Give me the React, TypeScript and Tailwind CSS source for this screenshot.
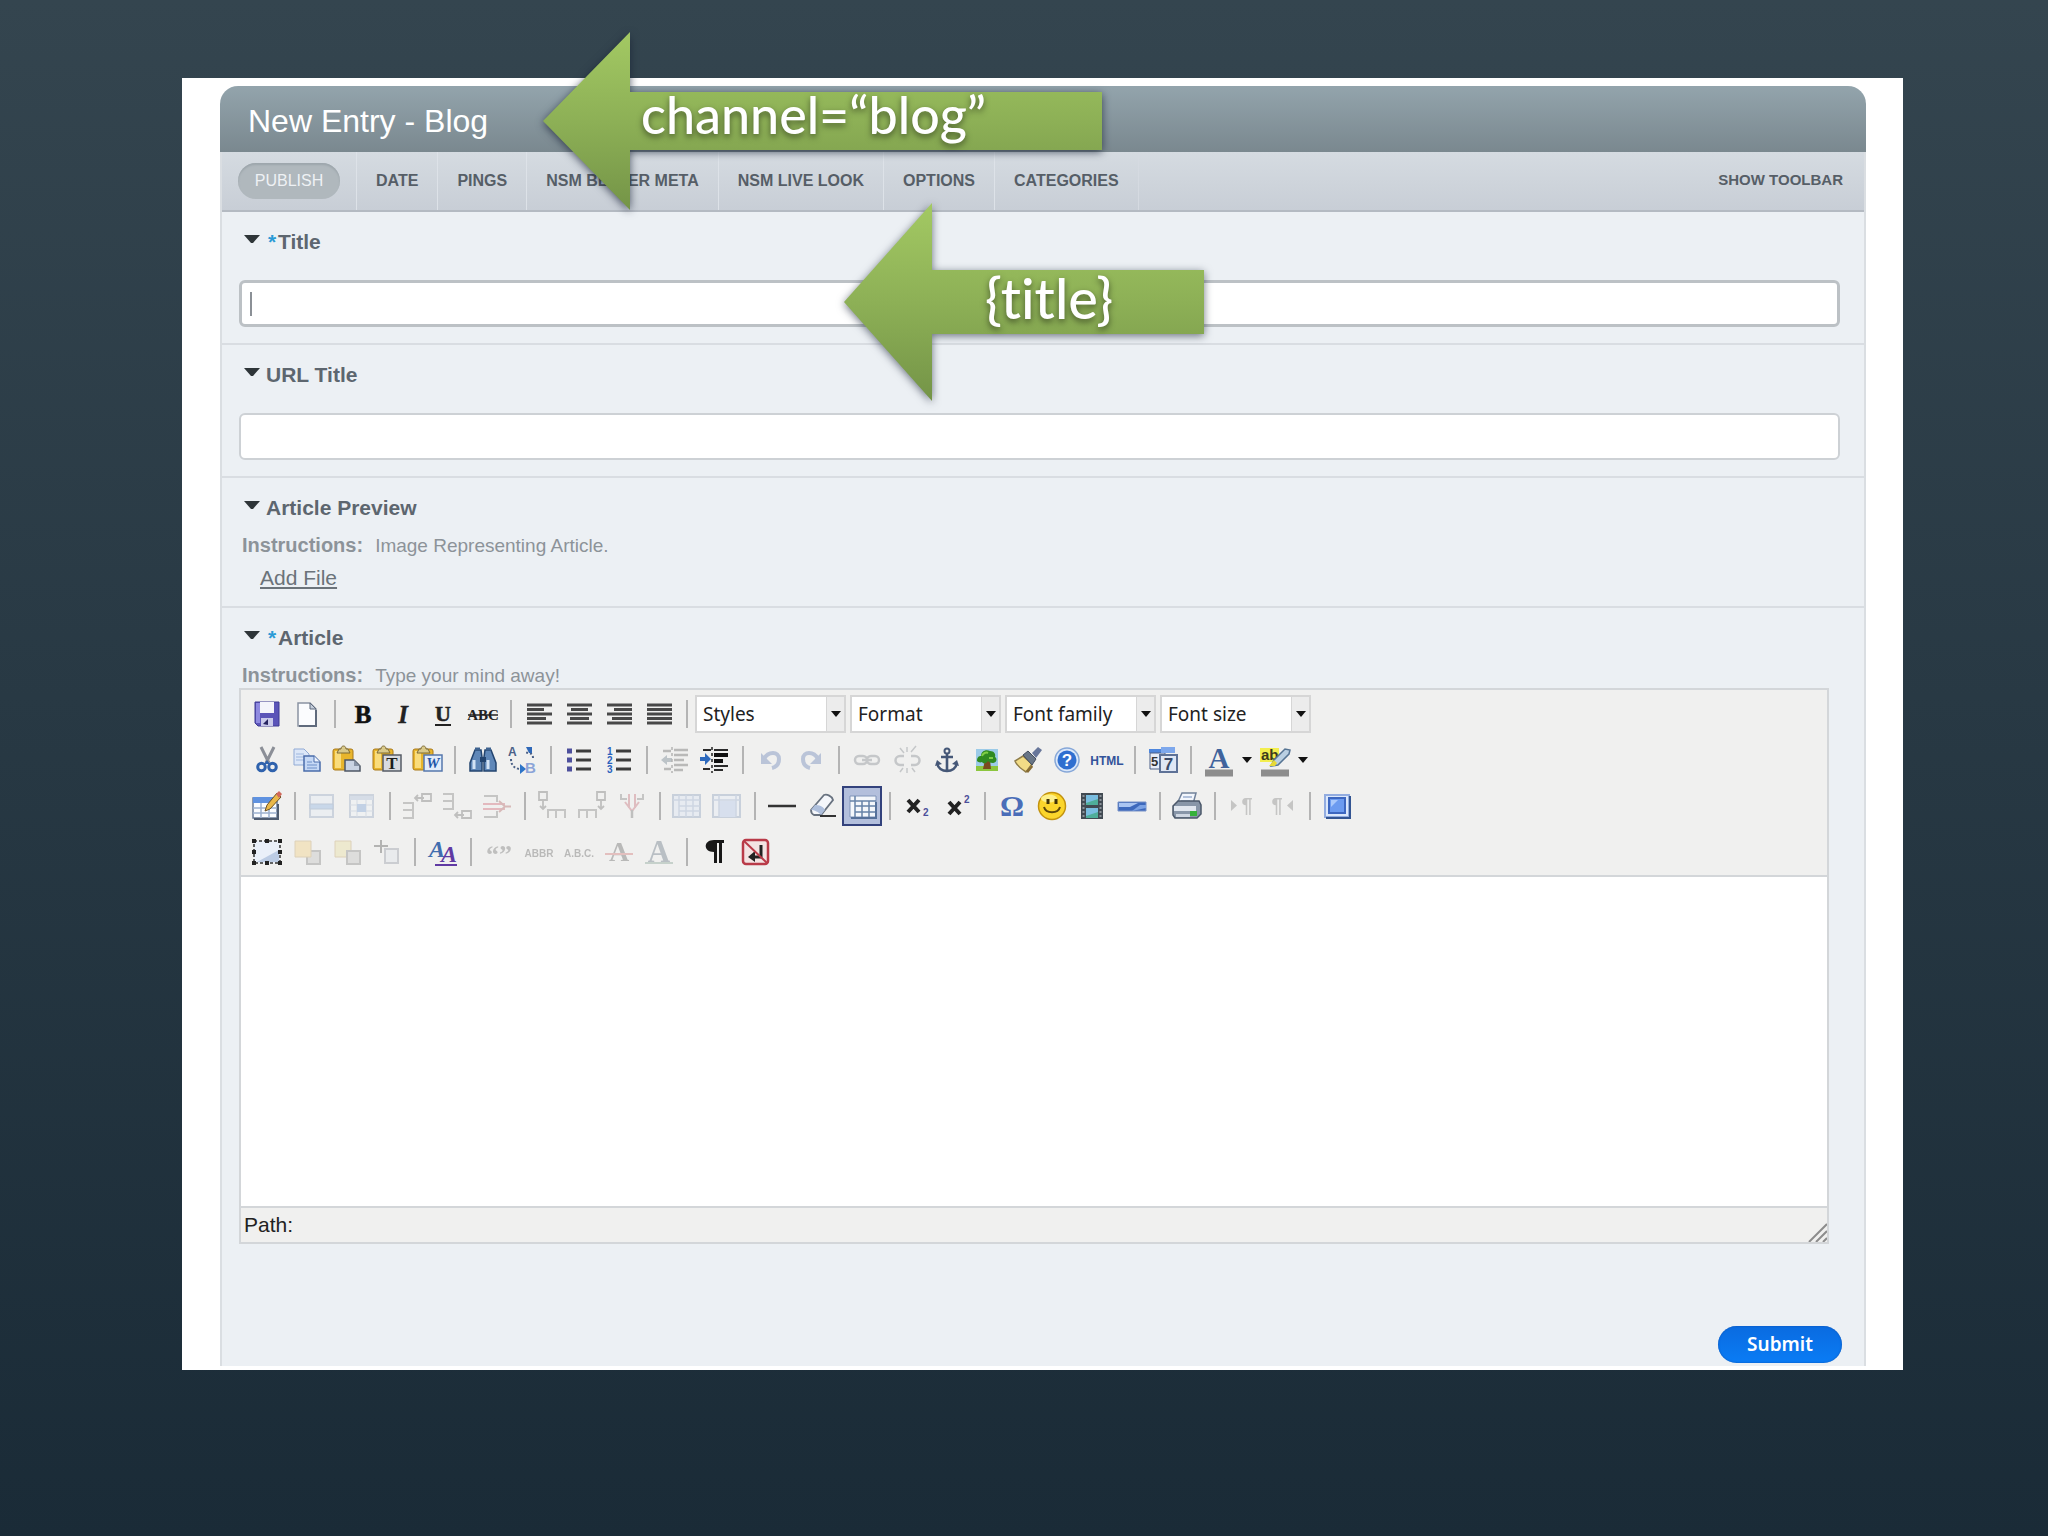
import React from 'react';

type IconDef = { name: string; art: React.ReactNode; faded?: boolean; active?: boolean; menu?: boolean };
type Item = IconDef | '|';

const serif = 'Liberation Serif, serif';
const sans = 'Liberation Sans, sans-serif';

function lines(rows: [number, number][], color = '#484848', weight = 3) {
  return rows.map(([x1, x2], i) => (
    <path key={i} d={`M${x1} ${11 + i * 4.5}H${x2}`} stroke={color} strokeWidth={weight} />
  ));
}

const clipboard = (
  <>
    <rect x="6" y="9" width="20" height="21" rx="2" fill="#e8b52c" stroke="#a8791a" />
    <path d="M8 11h6v17H8z" fill="#f9dc7c" />
    <path d="M10 13l2-4h2c0-4 5-4 5 0h2l2 4z" fill="#d9c98a" stroke="#7d6a35" />
  </>
);

const row1: Item[] = [
  {
    name: 'Save',
    art: (
      <>
        <path d="M8 8h24v24H11l-3-3z" fill="#5b54b8" stroke="#3f3a94" />
        <path d="M9 9h4v20H9z" fill="#8f8ae0" />
        <path d="M13 8h14v11H13z" fill="#f4f4fb" />
        <path d="M14 24h12v8H14z" fill="#c9c9ea" />
        <path d="M16 30l5-5v6z" fill="#26235f" />
      </>
    ),
  },
  {
    name: 'New document',
    art: (
      <>
        <path d="M11 9h12l6 6v17H11z" fill="#fbfcfe" stroke="#8a93a3" strokeWidth="1.5" />
        <path d="M29 16v16H12" fill="none" stroke="#5f6a7c" strokeWidth="2" />
        <path d="M23 9v6h6z" fill="#c5cedb" stroke="#5f6a7c" />
      </>
    ),
  },
  '|',
  { name: 'Bold', art: <text x="20" y="29" textAnchor="middle" fontFamily={serif} fontWeight="700" fontSize="25" stroke="#111" strokeWidth=".6" fill="#111">B</text> },
  { name: 'Italic', art: <text x="20" y="29" textAnchor="middle" fontFamily={serif} fontWeight="700" fontStyle="italic" fontSize="25" stroke="#222" strokeWidth=".4" fill="#222">I</text> },
  {
    name: 'Underline',
    art: (
      <>
        <text x="20" y="27" textAnchor="middle" fontFamily={serif} fontWeight="700" fontSize="22" stroke="#222" strokeWidth=".5" fill="#222">U</text>
        <path d="M12 31h16" stroke="#222" strokeWidth="2" />
      </>
    ),
  },
  {
    name: 'Strikethrough',
    art: (
      <>
        <text x="20" y="26" textAnchor="middle" fontFamily={serif} fontWeight="700" fontSize="15" fill="#222">ABC</text>
        <path d="M5 21h30" stroke="#222" strokeWidth="1.500" />
      </>
    ),
  },
  '|',
  { name: 'Align left', art: lines([[8, 33], [8, 25], [8, 33], [8, 27], [8, 33]]) },
  { name: 'Align center', art: lines([[8, 33], [12, 29], [8, 33], [11, 30], [8, 33]]) },
  { name: 'Align right', art: lines([[8, 33], [15, 33], [8, 33], [13, 33], [8, 33]]) },
  { name: 'Align full', art: lines([[8, 33], [8, 33], [8, 33], [8, 33], [8, 33]]) },
  '|',
];

const row2: Item[] = [
  {
    name: 'Cut',
    art: (
      <>
        <path d="M14 7l8 16M27 7l-8 16" stroke="#8b8f97" strokeWidth="3" />
        <circle cx="14.500" cy="27" r="3.800" fill="none" stroke="#2f62ad" strokeWidth="3" />
        <circle cx="25.500" cy="27" r="3.800" fill="none" stroke="#2f62ad" strokeWidth="3" />
        <path d="M17 24l3-4 3 4" fill="#2f62ad" />
      </>
    ),
  },
  {
    name: 'Copy',
    art: (
      <>
        <path d="M7 9h10l5 5v11H7z" fill="#dce7f8" stroke="#91aad4" />
        <path d="M9 14h8M9 17h8M9 20h8" stroke="#9db6de" />
        <path d="M17 16h10l6 6v9H17z" fill="#c5d8f5" stroke="#4a6cab" strokeWidth="1.500" />
        <path d="M27 16v6h6" fill="#eef4fd" stroke="#4a6cab" />
        <path d="M20 22h5M20 25h10M20 28h10" stroke="#6d8fc8" />
      </>
    ),
  },
  {
    name: 'Paste',
    art: (
      <>
        {clipboard}
        <path d="M18 20h9l6 6v5H18z" fill="#c9d3e2" stroke="#4d5765" strokeWidth="1.500" />
        <path d="M27 20v6h6z" fill="#8793a5" />
      </>
    ),
  },
  {
    name: 'Paste as plain text',
    art: (
      <>
        {clipboard}
        <rect x="16" y="15" width="18" height="16" fill="#d8dbe0" stroke="#555b66" strokeWidth="1.500" />
        <text x="25" y="29" textAnchor="middle" fontFamily={serif} fontWeight="700" fontSize="17" fill="#1d1d1d">T</text>
      </>
    ),
  },
  {
    name: 'Paste from Word',
    art: (
      <>
        {clipboard}
        <rect x="17" y="15" width="18" height="16" fill="#e3edfb" stroke="#5577ad" strokeWidth="1.500" />
        <text x="26" y="28" textAnchor="middle" fontFamily={serif} fontWeight="700" fontStyle="italic" fontSize="15" fill="#1f55a8">W</text>
      </>
    ),
  },
  '|',
  {
    name: 'Find',
    art: (
      <>
        <path d="M12 10h6l1 7v14H7v-8z" fill="#5f87b8" stroke="#23446f" strokeWidth="1.500" />
        <path d="M22 10h6l5 13v8H21V17z" fill="#5f87b8" stroke="#23446f" strokeWidth="1.500" />
        <path d="M17 17h6v5h-6z" fill="#23446f" />
        <path d="M11 20v9M25 20v9" stroke="#d3e3f5" strokeWidth="3" />
        <path d="M12 9h5M23 9h5" stroke="#3e628f" strokeWidth="3" />
      </>
    ),
  },
  {
    name: 'Find and replace',
    art: (
      <>
        <text x="5" y="16" fontFamily={sans} fontWeight="700" fontSize="12" fill="#4a6088">A</text>
        <text x="22" y="33" fontFamily={sans} fontWeight="700" fontSize="15" fill="#8ba4d8">B</text>
        <path d="M8 19c0 6 3 9 8 10" fill="none" stroke="#4a5f85" strokeWidth="2" strokeDasharray="2 2" />
        <path d="M17 24l6 5-6 5z" fill="#2d74c8" />
        <path d="M30 18c0-4-3-6-8-5" fill="none" stroke="#4a5f85" strokeWidth="2" strokeDasharray="2 2" />
        <path d="M23 7h6v6h-3z" fill="#2f68b8" />
      </>
    ),
  },
  '|',
  {
    name: 'Bulleted list',
    art: (
      <>
        <path d="M17 11h15M17 20h15M17 29h15" stroke="#3c3c3c" strokeWidth="3" />
        <path d="M8 11h5M8 20h5M8 29h5" stroke="#4d4f9c" strokeWidth="5" />
      </>
    ),
  },
  {
    name: 'Numbered list',
    art: (
      <>
        <path d="M17 11h15M17 20h15M17 29h15" stroke="#3c3c3c" strokeWidth="3" />
        <g fontFamily={sans} fontWeight="700" fontSize="10" fill="#2a62bd">
          <text x="8" y="15">1</text><text x="8" y="24">2</text><text x="8" y="33">3</text>
        </g>
      </>
    ),
  },
  '|',
  {
    name: 'Outdent', faded: true,
    art: (
      <>
        <path d="M8 11h8M19 10h14M19 15h14M19 20h10M19 25h14M9 29h7M19 30h9" stroke="#555" strokeWidth="2.500" />
        <path d="M6 20l6-5v3h5v4h-5v3z" fill="#5d7180" />
        <path d="M17 7v26" stroke="#444" strokeWidth="1.500" strokeDasharray="3 3" />
      </>
    ),
  },
  {
    name: 'Indent',
    art: (
      <>
        <path d="M8 10h8M8 29h7M19 10h14M19 26h14M19 30h9" stroke="#2a2a2a" strokeWidth="2" />
        <path d="M19 15h14M19 21h9" stroke="#111" strokeWidth="4" />
        <path d="M16 19l-6-6v4H5v4h5v4z" fill="#2c69bd" />
        <path d="M17 7v26" stroke="#222" strokeWidth="1.500" strokeDasharray="3 3" />
      </>
    ),
  },
  '|',
  {
    name: 'Undo', faded: true,
    art: (
      <>
        <path d="M13 19c4-8 15-8 15 0 0 5-3 8-7 9" fill="none" stroke="#5874b0" strokeWidth="4" />
        <path d="M10 13v11h11z" fill="#5874b0" />
      </>
    ),
  },
  {
    name: 'Redo', faded: true,
    art: (
      <>
        <path d="M27 19c-4-8-15-8-15 0 0 5 3 8 7 9" fill="none" stroke="#5874b0" strokeWidth="4" />
        <path d="M30 13v11H19z" fill="#5874b0" />
      </>
    ),
  },
  '|',
  {
    name: 'Insert link', faded: true,
    art: (
      <>
        <rect x="8" y="16" width="12" height="8" rx="4" fill="none" stroke="#777d84" strokeWidth="2.500" />
        <rect x="20" y="16" width="12" height="8" rx="4" fill="none" stroke="#777d84" strokeWidth="2.500" />
        <path d="M15 20h10" stroke="#777d84" strokeWidth="2.500" />
      </>
    ),
  },
  {
    name: 'Unlink', faded: true,
    art: (
      <>
        <path d="M17 16h-4a4.500 4.500 0 0 0 0 9h4M24 16h4a4.500 4.500 0 0 1 0 9h-4" fill="none" stroke="#777d84" strokeWidth="2.500" />
        <path d="M20 7v5M13 8l4 5M29 6l-5 6M20 28v5M13 32l3-4M28 32l-3-4" stroke="#777d84" strokeWidth="1.500" />
      </>
    ),
  },
  {
    name: 'Anchor',
    art: (
      <>
        <circle cx="20" cy="11" r="2.500" fill="none" stroke="#455777" strokeWidth="2" />
        <path d="M20 13v17M14 17h12M10 23c1 5 5 8 10 8s9-3 10-8" fill="none" stroke="#455777" strokeWidth="2.600" />
        <path d="M8 26l2-6 5 4zM32 26l-2-6-5 4z" fill="#455777" />
      </>
    ),
  },
  {
    name: 'Insert image',
    art: (
      <>
        <path d="M9 9h22v22H9z" fill="#9ccbe8" />
        <path d="M9 26h22v5H9z" fill="#8cc63e" />
        <path d="M18 20h5l1 9h-8z" fill="#7a4b1e" />
        <path d="M10 21c0-4 2-5 4-5 0-5 5-7 9-5 4 0 6 3 5 6 3 2 1 6-2 6-3 0-4-1-5-2-2 3-5 3-6 1-2 1-4 0-5-1z" fill="#2f8a21" />
        <path d="M15 16c1-3 4-4 6-3M22 18h4" stroke="#7fce46" strokeWidth="2" fill="none" />
      </>
    ),
  },
  {
    name: 'Clean up',
    art: (
      <>
        <path d="M8 21l8-5 9 8-6 8c-5-3-9-6-11-11z" fill="#f2dc86" stroke="#8e7c49" strokeWidth="1.500" />
        <path d="M16 15l5-4 8 8-4 6z" fill="#687586" stroke="#434d5d" />
        <path d="M25 13l6-6 4 3-6 8z" fill="#67769a" />
        <path d="M19 31l6-6 1 2-5 6z" fill="#876b32" />
      </>
    ),
  },
  {
    name: 'Help',
    art: (
      <>
        <circle cx="20" cy="20" r="12" fill="#dbe8fa" stroke="#86a7d8" strokeWidth="1.500" />
        <circle cx="20" cy="20" r="9.500" fill="#2f6fd0" />
        <text x="20" y="26" textAnchor="middle" fontFamily={sans} fontWeight="700" fontSize="17" fill="#fff">?</text>
      </>
    ),
  },
  { name: 'Edit HTML source', art: <text x="20" y="25" textAnchor="middle" fontFamily={sans} fontWeight="700" fontSize="12" fill="#33539a">HTML</text> },
  '|',
  {
    name: 'Insert date and time',
    art: (
      <>
        <path d="M6 9h24v4H6z" fill="#4d86dd" />
        <path d="M7 13h15v16H7z" fill="#e7edf8" stroke="#4b5e86" />
        <path d="M18 7h14v6H18z" fill="#7ea8ec" />
        <text x="8" y="26" fontFamily={sans} fontWeight="700" fontSize="13" fill="#333">5</text>
        <path d="M17 15h17v17H17z" fill="#dfe7f5" stroke="#5e7297" strokeWidth="2" />
        <text x="25.500" y="30" textAnchor="middle" fontFamily={sans} fontWeight="700" fontSize="17" fill="#3a4a68">7</text>
      </>
    ),
  },
  '|',
  {
    name: 'Text color', menu: true,
    art: (
      <>
        <text x="20" y="28" textAnchor="middle" fontFamily={serif} fontWeight="700" fontSize="29" fill="#3f639c">A</text>
        <path d="M6 33h28" stroke="#8d8d8d" strokeWidth="7" />
      </>
    ),
  },
  {
    name: 'Background color', menu: true,
    art: (
      <>
        <path d="M5 8h19v14H5z" fill="#f3ee4e" />
        <text x="6" y="20" fontFamily={sans} fontWeight="700" fontSize="15" fill="#3d3a1b">ab</text>
        <path d="M16 26l3-6L30 9l5 1-1 4-11 11z" fill="#b9cfe2" stroke="#567493" strokeWidth="1.500" />
        <path d="M14 26h6l2-3-3-3z" fill="#e7d936" />
        <path d="M6 33h28" stroke="#8d8d8d" strokeWidth="7" />
      </>
    ),
  },
];

const row3: Item[] = [
  {
    name: 'Insert table',
    art: (
      <>
        <path d="M6 12h24v20H6z" fill="#fafcff" stroke="#6b7c99" strokeWidth="1.500" />
        <path d="M6 11h24v6H6z" fill="#5f92e0" />
        <path d="M6 22h24M6 27h24M14 17v15M22 17v15" stroke="#9cb0d0" strokeWidth="1.500" />
        <path d="M7 33h24V18" stroke="#4e5b70" fill="none" strokeWidth="2" />
        <path d="M18 25l2-6L30 7l4 4-11 12z" fill="#e9b84a" stroke="#6d5124" />
        <path d="M29 8l3-3 3 3-3 4z" fill="#d0685b" />
      </>
    ),
  },
  '|',
  {
    name: 'Table row properties', faded: true,
    art: (
      <>
        <path d="M8 9h23v22H8z" fill="#e3ecf7" stroke="#8ca0bd" strokeWidth="2" />
        <path d="M8 18h23v5H8z" fill="#7fa9e0" stroke="#6b87b2" />
      </>
    ),
  },
  {
    name: 'Table cell properties', faded: true,
    art: (
      <>
        <path d="M8 9h23v22H8z" fill="#eef3fa" stroke="#8ca0bd" strokeWidth="2" />
        <path d="M8 10h23v4H8z" fill="#a8bcdb" />
        <path d="M8 19h23M8 25h23M15 14v17M24 14v17" stroke="#a7b6cd" />
        <path d="M15 18h9v8h-9z" fill="#6f98d4" />
      </>
    ),
  },
  '|',
  {
    name: 'Insert row before', faded: true,
    art: (
      <>
        <path d="M6 17h10v15H6M6 24h10" fill="none" stroke="#777" strokeWidth="2" />
        <path d="M18 12h9M21 9l-3 3 3 3M25 8h9v7h-9z" fill="none" stroke="#666" strokeWidth="1.800" />
      </>
    ),
  },
  {
    name: 'Insert row after', faded: true,
    art: (
      <>
        <path d="M6 8h10v15H6M6 15h10" fill="none" stroke="#777" strokeWidth="2" />
        <path d="M18 29h9M21 26l-3 3 3 3M25 25h9v7h-9z" fill="none" stroke="#666" strokeWidth="1.800" />
      </>
    ),
  },
  {
    name: 'Delete row', faded: true,
    art: (
      <>
        <path d="M7 10h13v6M7 31h13v-6" fill="none" stroke="#777" strokeWidth="2" />
        <path d="M6 18h22M6 23h22" stroke="#cc5566" strokeWidth="1.800" />
        <path d="M22 15l6 5.500-6 5.500M28 20.500h6" fill="none" stroke="#a55" strokeWidth="2" />
      </>
    ),
  },
  '|',
  {
    name: 'Insert column before', faded: true,
    art: (
      <>
        <path d="M7 6h8v8H7zM11 14v8M8 20l3 3 3-3" fill="none" stroke="#666" strokeWidth="1.800" />
        <path d="M16 32v-8h17v8M24 24v8" fill="none" stroke="#777" strokeWidth="2" />
      </>
    ),
  },
  {
    name: 'Insert column after', faded: true,
    art: (
      <>
        <path d="M25 6h8v8h-8zM29 14v8M26 20l3 3 3-3" fill="none" stroke="#666" strokeWidth="1.800" />
        <path d="M7 32v-8h17v8M15 24v8" fill="none" stroke="#777" strokeWidth="2" />
      </>
    ),
  },
  {
    name: 'Delete column', faded: true,
    art: (
      <>
        <path d="M9 8v5h6M31 8v5h-6" fill="none" stroke="#777" strokeWidth="2" />
        <path d="M17 8v14M23 8v14M13 16l7 9 7-9" fill="none" stroke="#c0606c" strokeWidth="2" />
        <path d="M20 24v8" stroke="#666" strokeWidth="2.500" />
      </>
    ),
  },
  '|',
  {
    name: 'Split cells', faded: true,
    art: (
      <>
        <path d="M6 9h27v22H6z" fill="#d9e4f5" stroke="#8095b8" strokeWidth="2" />
        <path d="M6 14h27M12 9v22M12 20h21M12 25h21M19 9v22M26 9v22" stroke="#8fa6cc" strokeWidth="1.500" />
      </>
    ),
  },
  {
    name: 'Merge cells', faded: true,
    art: (
      <>
        <path d="M6 9h27v22H6z" fill="#e3ebf8" stroke="#8095b8" strokeWidth="2" />
        <path d="M12 15h17v16H12z" fill="#a9c2ea" />
        <path d="M6 14h27M12 9v22M29 9v22" stroke="#8fa6cc" strokeWidth="1.500" />
      </>
    ),
  },
  '|',
  { name: 'Horizontal rule', art: <path d="M6 20h28" stroke="#333" strokeWidth="2.500" /> },
  {
    name: 'Remove formatting',
    art: (
      <>
        <path d="M9 24L22 9c3-1 8 1 9 5L19 29h-7c-2-1-3-3-3-5z" fill="#f5f7fb" stroke="#68727f" strokeWidth="1.800" />
        <path d="M9 24c3 0 8 2 10 5l4-5c-2-4-6-5-10-5z" fill="#aebfdc" />
        <path d="M18 30h16" stroke="#333" strokeWidth="2" />
      </>
    ),
  },
  {
    name: 'Toggle guidelines', active: true,
    art: (
      <>
        <path d="M8 10h26v21H8z" fill="#f4f7fb" stroke="#7f93b8" />
        <path d="M8 15h26M13 20h21M13 26h21M13 10v21M20 15v16M27 15v16" stroke="#6683a8" strokeWidth="1.500" />
        <path d="M9 32h25V16" fill="none" stroke="#56719a" strokeWidth="2" />
      </>
    ),
  },
  '|',
  {
    name: 'Subscript',
    art: (
      <>
        <path d="M11 14l11 12M22 14L11 26" stroke="#222" strokeWidth="4" />
        <text x="26" y="30" fontFamily={sans} fontWeight="700" fontSize="10" fill="#4b4f9a">2</text>
      </>
    ),
  },
  {
    name: 'Superscript',
    art: (
      <>
        <path d="M12 16l11 12M23 16L12 28" stroke="#222" strokeWidth="4" />
        <text x="27" y="17" fontFamily={sans} fontWeight="700" fontSize="10" fill="#4b4f9a">2</text>
      </>
    ),
  },
  '|',
  { name: 'Custom character', art: <text x="20" y="30" textAnchor="middle" fontFamily={serif} fontWeight="700" fontSize="30" fill="#4a6db8">Ω</text> },
  {
    name: 'Emotions',
    art: (
      <>
        <circle cx="20" cy="20" r="13.500" fill="#fbd52b" stroke="#c3930f" strokeWidth="1.500" />
        <ellipse cx="17" cy="12.500" rx="8" ry="4" fill="#fdf08b" />
        <path d="M16 13v5M24 13v5" stroke="#3f3208" strokeWidth="3" />
        <path d="M12 21c2 7 14 7 16 0" fill="none" stroke="#5e480a" strokeWidth="2" />
      </>
    ),
  },
  {
    name: 'Embedded media',
    art: (
      <>
        <path d="M9 7h22v26H9z" fill="#414a52" />
        <path d="M14 9h12v10H14zM14 22h12v10H14z" fill="#4fae9a" />
        <path d="M14 9h12v4L14 17zM14 22h12v4L14 30z" fill="#79bde0" />
        <path d="M11.500 9v23M28.500 9v23" stroke="#8b9299" strokeWidth="2" strokeDasharray="2 2" />
      </>
    ),
  },
  {
    name: 'Advanced rule',
    art: (
      <>
        <path d="M6 16h28v9H6z" fill="#3d69bd" stroke="#7992c6" />
        <path d="M7 17h19l-8 4H7z" fill="#aac5f2" />
        <path d="M20 25l8-6h6v3z" fill="#7ba2e4" />
      </>
    ),
  },
  '|',
  {
    name: 'Print',
    art: (
      <>
        <path d="M15 7h14l-3 11H10z" fill="#f2f6fc" stroke="#71829b" strokeWidth="1.500" />
        <path d="M16 11h9M14 15h9" stroke="#9cb0cf" strokeWidth="1.500" />
        <path d="M6 20l5-5h21l2 4v9l-4 4H8l-2-3z" fill="#8896a8" stroke="#4b586a" strokeWidth="1.500" />
        <path d="M7 20h22v5H7z" fill="#e1e7ef" />
        <path d="M9 28h14v3H9z" fill="#cfd7e2" />
        <path d="M23 25h7v5h-7z" fill="#35b13a" />
      </>
    ),
  },
  '|',
  {
    name: 'Left to right', faded: true,
    art: (
      <>
        <path d="M9 14v11l6-5.500z" fill="#777" />
        <text x="25" y="26" textAnchor="middle" fontFamily={sans} fontWeight="700" fontSize="20" fill="#777">¶</text>
      </>
    ),
  },
  {
    name: 'Right to left', faded: true,
    art: (
      <>
        <text x="15" y="26" textAnchor="middle" fontFamily={sans} fontWeight="700" fontSize="20" fill="#777">¶</text>
        <path d="M31 14v11l-6-5.500z" fill="#777" />
      </>
    ),
  },
  '|',
  {
    name: 'Fullscreen',
    art: (
      <>
        <path d="M8 9h24v22H8z" fill="#dce8fb" stroke="#92ace0" strokeWidth="2" />
        <path d="M9 32h24V10" fill="none" stroke="#335592" strokeWidth="2" />
        <path d="M12 12h16v15H12z" fill="#6c9bf0" stroke="#3d67c0" strokeWidth="2" />
        <path d="M14 14h7l-7 7z" fill="#a9c8fb" />
      </>
    ),
  },
];

const row4: Item[] = [
  {
    name: 'Insert layer',
    art: (
      <>
        <path d="M7 9h26v22H7z" fill="#eaf0f9" stroke="#333" strokeWidth="1.500" strokeDasharray="3 2" />
        <path d="M10 30l22-12v12z" fill="#bccce4" />
        <path d="M5 9h4M18 9h4M31 9h4M5 20h4M31 20h4M5 31h4M18 31h4M31 31h4" stroke="#222" strokeWidth="4" />
      </>
    ),
  },
  {
    name: 'Move forward', faded: true,
    art: (
      <>
        <path d="M20 19h13v13H20z" fill="#bbb" stroke="#777" strokeWidth="2" />
        <path d="M8 9h16v16H8z" fill="#f5cd73" stroke="#bc9956" />
      </>
    ),
  },
  {
    name: 'Move backward', faded: true,
    art: (
      <>
        <path d="M8 9h16v16H8z" fill="#eadd94" stroke="#bc9956" />
        <path d="M20 19h13v13H20z" fill="#bbb" stroke="#777" strokeWidth="2" />
      </>
    ),
  },
  {
    name: 'Toggle absolute positioning', faded: true,
    art: (
      <>
        <path d="M18 17h13v14H18z" fill="#dde3ec" stroke="#888f9b" strokeWidth="2" />
        <path d="M7 14h14M14 8v13" stroke="#444" strokeWidth="2" />
      </>
    ),
  },
  '|',
  {
    name: 'Edit CSS style',
    art: (
      <>
        <text x="14" y="25" textAnchor="middle" fontFamily={serif} fontWeight="700" fontStyle="italic" fontSize="24" fill="#416dae">A</text>
        <text x="26" y="30" textAnchor="middle" fontFamily={serif} fontWeight="700" fontStyle="italic" fontSize="24" fill="#603aa3">A</text>
        <path d="M12 33h22" stroke="#603aa3" strokeWidth="2" />
      </>
    ),
  },
  '|',
  { name: 'Citation', faded: true, art: <text x="20" y="31" textAnchor="middle" fontFamily={serif} fontWeight="700" fontSize="26" fill="#666">“”</text> },
  { name: 'Abbreviation', faded: true, art: <text x="20" y="25" textAnchor="middle" fontFamily={sans} fontWeight="700" fontSize="10" fill="#555">ABBR</text> },
  { name: 'Acronym', faded: true, art: <text x="20" y="25" textAnchor="middle" fontFamily={sans} fontWeight="700" fontSize="10" fill="#555">A.B.C.</text> },
  {
    name: 'Deletion', faded: true,
    art: (
      <>
        <text x="20" y="29" textAnchor="middle" fontFamily={serif} fontWeight="700" fontSize="28" fill="#555">A</text>
        <path d="M6 22h28" stroke="#c66" strokeWidth="2" />
      </>
    ),
  },
  {
    name: 'Insertion', faded: true,
    art: (
      <>
        <text x="20" y="30" textAnchor="middle" fontFamily={serif} fontWeight="700" fontSize="31" fill="#567">A</text>
        <path d="M6 31h28" stroke="#7a9a8a" strokeWidth="2" />
      </>
    ),
  },
  '|',
  {
    name: 'Show control characters',
    art: <path d="M29 8v3h-2v20h-3V11h-2v20h-3V20c-11 0-11-12 0-12z" fill="#181818" />,
  },
  {
    name: 'Insert non-breaking space',
    art: (
      <>
        <rect x="8" y="8" width="25" height="24" rx="3" fill="#f3e3e3" stroke="#b93a48" strokeWidth="2.500" />
        <path d="M26 13v12h-7" fill="none" stroke="#222" strokeWidth="3" />
        <path d="M20 19v11l-7-5z" fill="#222" />
        <path d="M9 9l23 22" stroke="#b93a48" strokeWidth="2" />
      </>
    ),
  },
];

function Caret() {
  return (
    <svg viewBox="0 0 10 6" className="h-1.5 w-2.5 shrink-0" aria-hidden="true">
      <path d="M0 0h10L5 6z" fill="#111" />
    </svg>
  );
}

function Tools({ items, dense }: { items: Item[]; dense?: boolean }) {
  return (
    <>
      {items.map((it, i) =>
        it === '|' ? (
          <span key={i} className={dense ? 'flex w-[15px] shrink-0 justify-center' : 'flex w-4 shrink-0 justify-center'}>
            <span className="h-7 w-0.5 bg-[#b4b4b4]" />
          </span>
        ) : (
          <React.Fragment key={i}>
            <button
              type="button"
              aria-label={it.name}
              className={
                it.active
                  ? 'size-10 shrink-0 border-2 border-[#33427c] bg-[#b3bfdc]'
                  : it.faded
                    ? 'size-10 shrink-0 opacity-35'
                    : 'size-10 shrink-0'
              }
            >
              <svg viewBox={it.active ? '2 2 36 36' : '0 0 40 40'} className="size-full" aria-hidden="true">
                {it.art}
              </svg>
            </button>
            {it.menu && (
              <button type="button" aria-label={`${it.name} menu`} className="flex h-10 w-4 shrink-0 items-center justify-center">
                <Caret />
              </button>
            )}
          </React.Fragment>
        ),
      )}
    </>
  );
}

function Picker({ label }: { label: string }) {
  return (
    <div className="mr-1 flex h-[38px] w-[151px] shrink-0 border-2 border-[#d6d6d6] bg-white">
      <select aria-label={label} className="min-w-0 flex-1 appearance-none bg-white pl-1.5 font-['Noto_Sans',sans-serif] text-[19px] text-[#222] outline-none">
        <option>{label}</option>
      </select>
      <span className="flex w-[18px] items-center justify-center border-l border-[#d6d6d6] bg-[#ececec]">
        <Caret />
      </span>
    </div>
  );
}

function FieldLabel({ text, required, htmlFor }: { text: string; required?: boolean; htmlFor: string }) {
  return (
    <div className="flex h-7 items-center pl-[5px]">
      <svg viewBox="0 0 16 8" className="mr-1.5 mb-1.5 h-2 w-4" aria-hidden="true">
        <path d="M0 0h16L9 8H7z" fill="#2e3538" />
      </svg>
      {required && <span className="w-3 text-center text-[21px] font-bold text-[#2b9bd6]">*</span>}
      <label htmlFor={htmlFor} className="text-[21px] font-bold text-[#5d666f]">{text}</label>
    </div>
  );
}

function Instructions({ text }: { text: string }) {
  return (
    <p className="mt-2.5 h-[26px] pl-[3px] text-[19px] leading-[26px] text-[#8c9399]">
      <strong className="mr-3 text-xl leading-[26px]">Instructions:</strong>
      {text}
    </p>
  );
}

function Arrow({ id, points, box, className }: { id: string; points: string; box: string; className: string }) {
  return (
    <svg viewBox={box} className={className} aria-hidden="true">
      <defs>
        <linearGradient id={id} x1="0" y1="0" x2="0" y2="1">
          <stop offset="0" stopColor="#a3c963" />
          <stop offset="0.500" stopColor="#8db056" />
          <stop offset="1" stopColor="#749447" />
        </linearGradient>
      </defs>
      <polygon points={points} fill={`url(#${id})`} />
    </svg>
  );
}

const tabs = ['DATE', 'PINGS', 'NSM BETTER META', 'NSM LIVE LOOK', 'OPTIONS', 'CATEGORIES'];

export default function App() {
  return (
    <main className="min-h-screen bg-linear-to-b from-[#34454f] to-[#1a2b37] pt-[78px] pr-[145px] pb-20 pl-[182px] font-['Liberation_Sans',Arial,sans-serif]">
      <div className="bg-white pt-2 pr-[37px] pb-1 pl-[38px]">
        <header className="relative flex h-[66px] items-center rounded-t-[18px] bg-linear-to-b from-[#93a4ac] to-[#7a888f] pl-7">
          <h1 className="pt-1 text-[32px] text-white">New Entry - Blog</h1>
          <div className="absolute top-[-54px] left-[323px] z-10 h-[178px] w-[559px]">
            <Arrow
              id="channel-arrow"
              box="0 0 559 178"
              points="0,89 87,0 87,60 559,60 559,118 87,118 87,178"
              className="h-full w-full overflow-visible drop-shadow-[0_2px_4px_rgba(20,30,50,0.7)]"
            />
            <span className="absolute top-[46px] left-[98px] font-['Lato',sans-serif] text-[52px] leading-[72px] font-medium whitespace-nowrap text-white [text-shadow:0_3px_6px_rgba(0,0,0,0.5)]">
              channel=“blog”
            </span>
          </div>
        </header>

        <div className="border-x-2 border-[#dadee2] bg-[#ecf0f4]">
          <nav className="flex h-[60px] items-stretch border-b-2 border-[#b4bac2] bg-linear-to-b from-[#d5dbe1] to-[#c8ced6] text-base font-bold text-[#565e67]">
            <div className="flex items-center px-4">
              <button type="button" className="h-9 w-[102px] rounded-full bg-[#b0b8bd] font-normal text-[#eef1f4] shadow-[inset_0_2px_2px_#9da6ac]">PUBLISH</button>
            </div>
            {tabs.map((t) => (
              <button key={t} type="button" className="border-l border-[#dde2e8] px-[19px] whitespace-nowrap">{t}</button>
            ))}
            <span className="border-l border-[#d5dae1]" />
            <button type="button" className="ml-auto pr-[21px] pb-0.5 text-[15px] whitespace-nowrap">SHOW TOOLBAR</button>
          </nav>

          <section className="relative border-b-2 border-[#d9dde2] pt-4 pr-6 pb-4 pl-[17px]">
            <FieldLabel text="Title" required htmlFor="title" />
            <div className="mt-6 flex h-[47px] items-center rounded-md border-[3px] border-[#bcc1c5] bg-white pl-2">
              <span className="h-6 w-0.5 bg-[#8b9096]" />
              <input id="title" type="text" className="h-full min-w-0 flex-1 bg-transparent text-[21px] outline-none" />
            </div>
            <div className="absolute top-[-9px] left-[622px] z-10 h-[198px] w-[360px]">
              <Arrow
                id="title-arrow"
                box="0 0 360 198"
                points="0,99 88,0 88,67 360,67 360,131 88,131 88,198"
                className="h-full w-full overflow-visible drop-shadow-[0_2px_4px_rgba(20,30,50,0.6)]"
              />
              <span className="absolute top-[59px] left-[141px] font-['Lato',sans-serif] text-[56px] leading-[72px] font-medium text-white [font-variant-ligatures:none] [text-shadow:0_3px_6px_rgba(0,0,0,0.5)]">
                {'{title}'}
              </span>
            </div>
          </section>

          <section className="border-b-2 border-[#d9dde2] pt-4 pr-6 pb-4 pl-[17px]">
            <FieldLabel text="URL Title" htmlFor="url-title" />
            <input id="url-title" type="text" className="mt-6 block h-[47px] w-full rounded-md border-2 border-[#cdd1d5] bg-white px-2 text-[21px] outline-none" />
          </section>

          <section className="border-b-2 border-[#d9dde2] pt-4 pr-6 pb-3.5 pl-[17px]">
            <FieldLabel text="Article Preview" htmlFor="add-file" />
            <Instructions text="Image Representing Article." />
            <a id="add-file" href="#add-file" className="mt-1.5 ml-[21px] block h-7 w-fit text-[21px] leading-7 text-[#6b737a] underline">Add File</a>
          </section>

          <section className="pt-4 pr-[35px] pl-[17px]">
            <FieldLabel text="Article" required htmlFor="article" />
            <Instructions text="Type your mind away!" />
            <div className="border-2 border-[#d3d6d9] bg-[#f0f0ef]">
              <div className="border-b-2 border-[#d3d6d9] pt-px pl-1.5">
                <div className="flex h-[46px] items-center">
                  <Tools items={row1} />
                  {['Styles', 'Format', 'Font family', 'Font size'].map((l) => <Picker key={l} label={l} />)}
                </div>
                <div className="flex h-[46px] items-center"><Tools items={row2} /></div>
                <div className="flex h-[46px] items-center"><Tools items={row3} dense /></div>
                <div className="flex h-[46px] items-center"><Tools items={row4} /></div>
              </div>
              <textarea id="article" className="block h-[329px] w-full resize-none bg-white p-3 text-[21px] outline-none" />
              <div className="flex h-9 items-center justify-between border-t-2 border-[#d3d6d9] pl-[3px] text-[21px] text-[#222]">
                <span>Path:</span>
                <svg viewBox="0 0 20 20" className="size-5 self-end" aria-hidden="true">
                  <path d="M2 20L20 2M9 20L20 9M16 20l4-4" stroke="#8c8c8c" strokeWidth="2" />
                </svg>
              </div>
            </div>
          </section>

          <div className="flex justify-end pt-[82px] pr-[22px] pb-[3px]">
            <button type="submit" className="h-[37px] w-[124px] rounded-full bg-linear-to-b from-[#0a6be0] to-[#0a7cf5] font-['Noto_Sans',sans-serif] text-[19px] font-semibold text-white shadow-[inset_0_0_2px_#0b4fae]">Submit</button>
          </div>
        </div>
      </div>
    </main>
  );
}
